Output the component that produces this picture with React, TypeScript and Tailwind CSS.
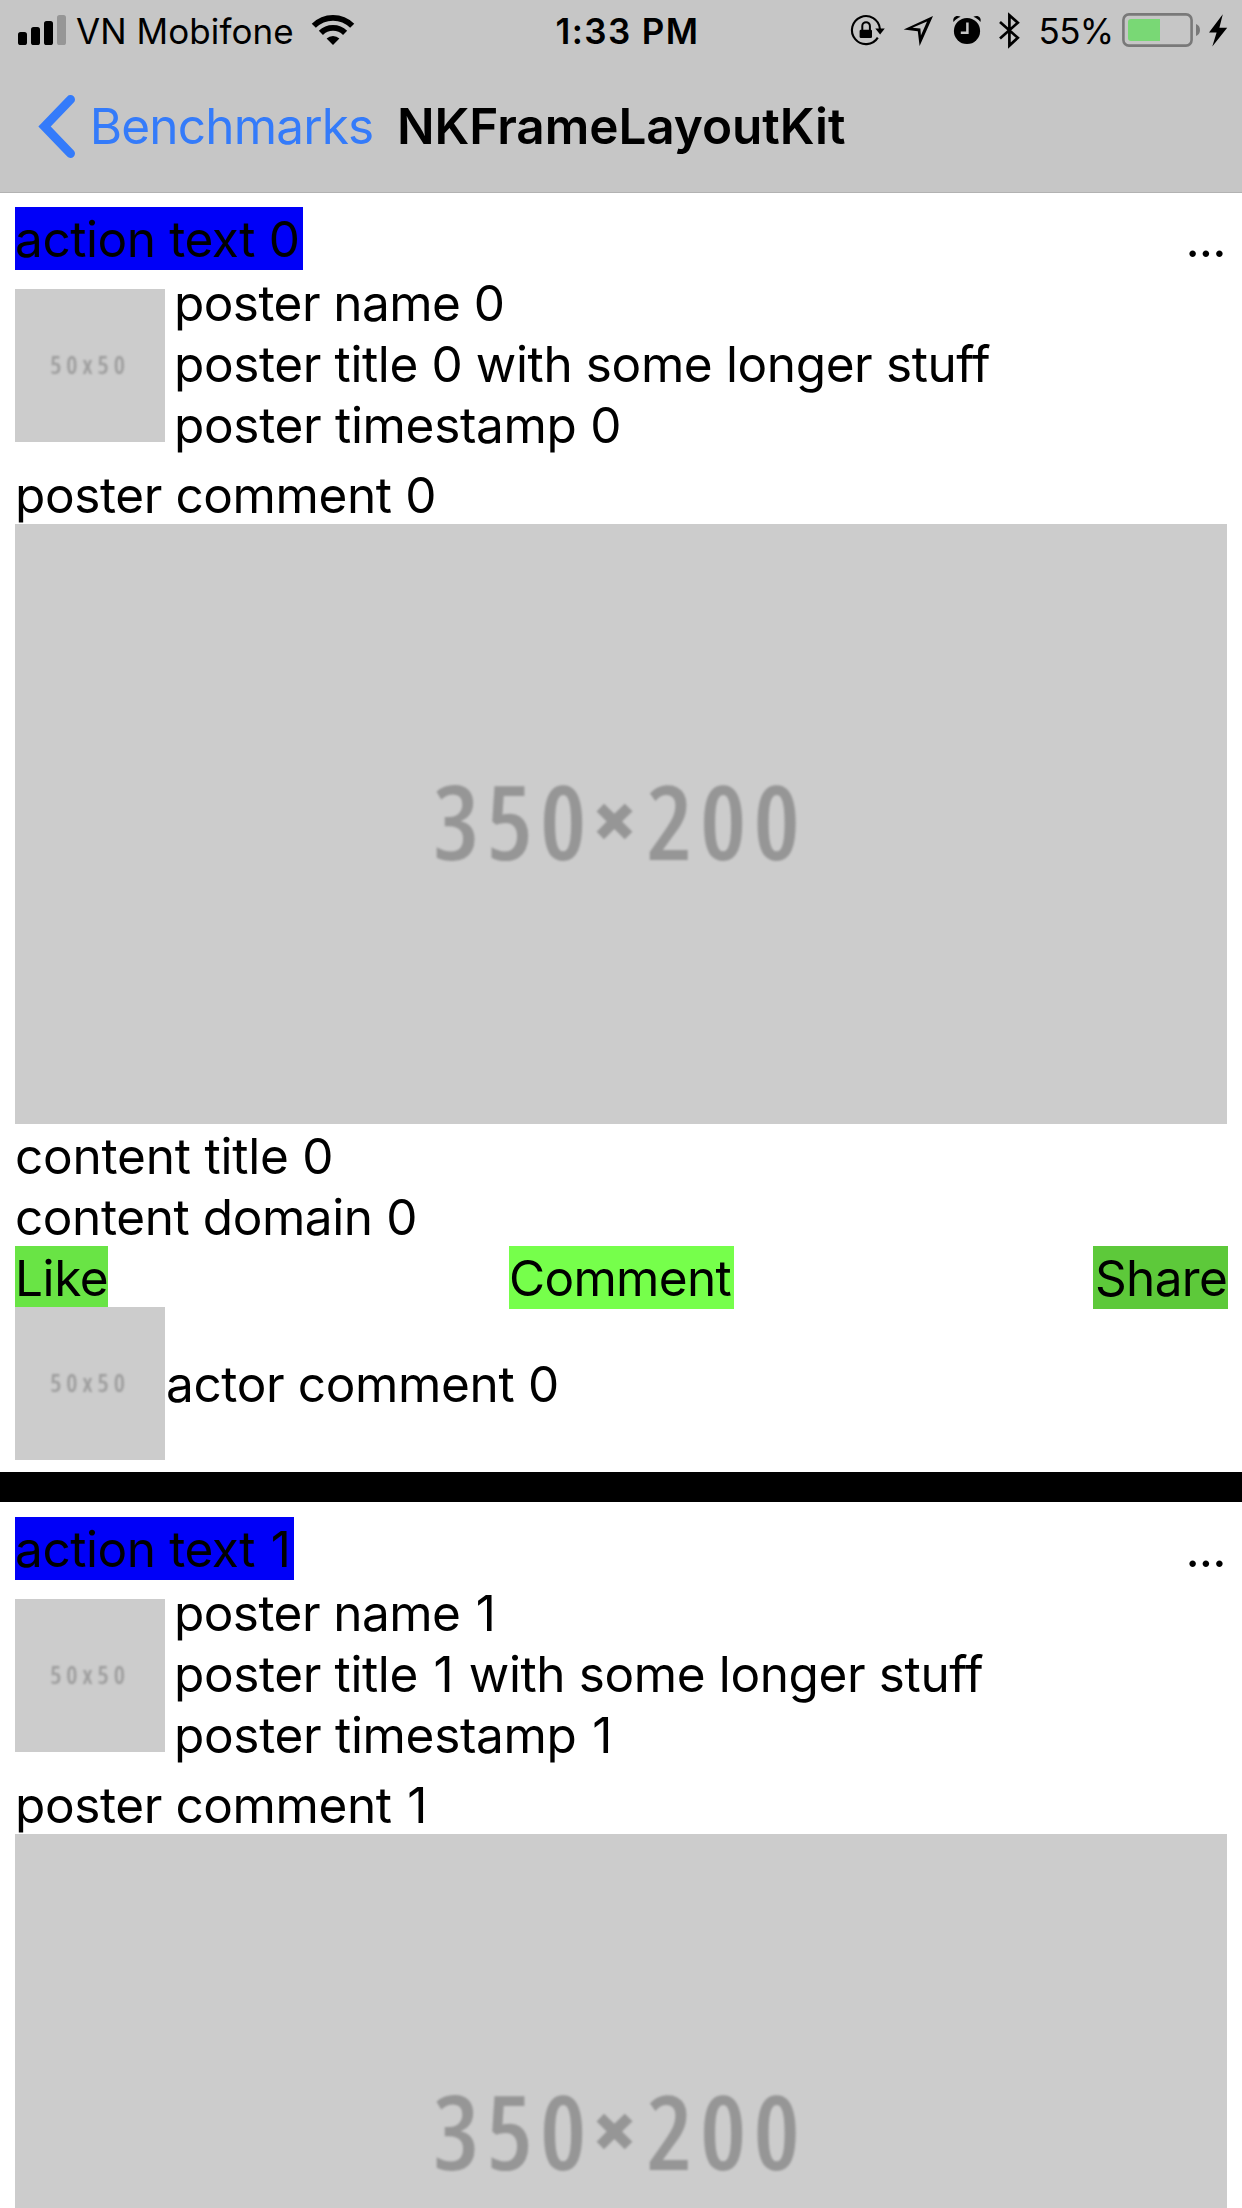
type Post = {
  id: number;
  actionWidth: string;
  numberStyle: string;
  expanded: boolean;
};

const posts: Post[] = [
  { id: 0, actionWidth: "w-[288px]", numberStyle: "", expanded: true },
  { id: 1, actionWidth: "w-[279px]", numberStyle: "pl-[2px] pr-[2px]", expanded: false },
];

function StatusBar() {
  return (
    <div className="flex h-[60px] text-[35px] leading-[63px] whitespace-pre">
      <svg className="shrink-0" width="72" height="60" viewBox="0 0 72 60">
        <rect x="18" y="32" width="9" height="13" rx="2.6" />
        <rect x="31" y="27" width="9" height="18" rx="2.6" />
        <rect x="44" y="21" width="9" height="24" rx="2.6" />
        <rect x="57" y="15" width="9" height="30" rx="2.6" fill="#969696" />
      </svg>
      <span className="w-[228px] shrink-0 pl-[4px] tracking-[0.08px]">VN Mobifone</span>
      <svg className="shrink-0" width="60" height="60" viewBox="300 0 60 60">
        <path d="M333 45 L326.6 38.6 A9 9 0 0 1 339.4 38.6 Z" />
        <path d="M320.9 32.9 A17.1 17.1 0 0 1 345.1 32.9" fill="none" stroke="#000" strokeWidth="5.8" />
        <path d="M313.8 25.8 A27.1 27.1 0 0 1 352.2 25.8" fill="none" stroke="#000" strokeWidth="5.8" />
      </svg>
      <span className="flex-1 pl-[195.5px] font-[570] tracking-[1.4px]">1:33 PM</span>
      <svg className="shrink-0" width="55" height="60" viewBox="840 0 55 60">
        <path d="M879.9 29 A14 14 0 1 0 877.8 37.6" fill="none" stroke="#000" strokeWidth="2.1" />
        <path d="M875.3 28.4 H884.8 L880.1 34.4 Z" />
        <rect x="859.6" y="29.8" width="12.4" height="8.2" rx="1.3" />
        <path d="M862.3 31 V26 A3.8 3.8 0 0 1 869.9 26 V31" fill="none" stroke="#000" strokeWidth="2" />
      </svg>
      <svg className="shrink-0" width="47" height="60" viewBox="895 0 47 60">
        <path
          fillRule="evenodd"
          d="M903.7 29.6 L933 16 L919.6 46 L917.8 31.2 Z M912.4 27.7 L927 21.4 L920.9 35.6 L920.4 28.6 Z"
        />
      </svg>
      <svg className="shrink-0" width="48" height="60" viewBox="942 0 48 60">
        <circle cx="967" cy="31" r="13.1" />
        <path d="M953.6 22 C952 17.6 956.2 14.4 960.6 16.8 C957.6 18 955.4 19.6 953.6 22 Z" />
        <path d="M980.4 22 C982 17.6 977.8 14.4 973.4 16.8 C976.4 18 978.6 19.6 980.4 22 Z" />
        <path d="M967.4 22.4 V32.8 H960.8" fill="none" stroke="#c6c6c6" strokeWidth="2.5" />
      </svg>
      <svg className="shrink-0" width="40" height="60" viewBox="990 0 40 60">
        <path
          d="M1000 22 L1017.8 37.8 L1009.4 45.6 V15.2 L1017.8 22.7 L1000 38.4"
          fill="none"
          stroke="#000"
          strokeWidth="2.7"
        />
      </svg>
      <span className="w-[88px] shrink-0 pl-[8.5px] tracking-[-0.63px]">55%</span>
      <svg className="shrink-0" width="86" height="60" viewBox="1118 0 86 60">
        <rect x="1123.4" y="14.4" width="68.2" height="31.2" rx="5.6" fill="none" stroke="#797979" strokeWidth="2.6" />
        <path d="M1160 19 V41 H1131 Q1128 41 1128 38 V22 Q1128 19 1131 19 Z" fill="#79d875" />
        <path d="M1196 24 C1201.3 25.5 1201.3 34.5 1196 36 Z" fill="#797979" />
      </svg>
      <svg className="shrink-0" width="38" height="60" viewBox="1204 0 38 60">
        <path d="M1222.8 14.3 L1209 32.4 H1216.6 L1212.3 46.4 L1227.2 27.8 H1219.4 Z" />
      </svg>
    </div>
  );
}

function NavBar() {
  return (
    <div className="flex h-[132px] items-start text-[49.5px] leading-[132px]">
      <svg className="shrink-0" width="89" height="132" viewBox="0 60 89 132">
        <path
          d="M70.5 99.5 L44.6 126.5 L70.5 153.5"
          fill="none"
          stroke="#347bfa"
          strokeWidth="9"
          strokeLinecap="round"
          strokeLinejoin="miter"
        />
      </svg>
      <span className="w-[308px] shrink-0 pl-[0.7px] tracking-[-0.82px] text-[#347bfa]">Benchmarks</span>
      <h1 className="font-semibold tracking-[-0.06px]">NKFrameLayoutKit</h1>
    </div>
  );
}

function Thumbnail() {
  return (
    <div className="flex h-[153px] w-[150px] shrink-0 items-center justify-center bg-[#ccc]">
      <span className="pb-[2px] font-['Open_Sans',sans-serif] text-[25px] leading-none font-semibold tracking-[5px] text-[#9c9c9c] blur-[1.1px] [font-stretch:75%]">
        50x50
      </span>
    </div>
  );
}

function Banner() {
  return (
    <div className="flex h-[600px] items-center justify-center bg-[#ccc]">
      <div className="flex items-center pr-[2px] pb-[9px] font-['Open_Sans',sans-serif] text-[103.5px] leading-none font-semibold tracking-[7.2px] text-[#969696] blur-[0.9px] [font-stretch:75%]">
        <span>350</span>
        <span className="pb-[2px] text-[84px] font-extrabold tracking-[11px]">×</span>
        <span>200</span>
      </div>
    </div>
  );
}

function PostCard({ post }: { post: Post }) {
  const num = <span className={post.numberStyle}>{post.id}</span>;
  return (
    <article className="h-[1280px] bg-white px-[15px] pt-[15px] leading-[64px] tracking-[-0.42px] whitespace-nowrap">
      <div className="flex h-[64px] justify-between">
        <div className={`h-[63px] bg-[#0000f8] ${post.actionWidth}`}>action text {num}</div>
        <div className="pr-[1.5px] tracking-[-0.9px]">...</div>
      </div>
      <div className="flex h-[183px]">
        <div className="pt-[18px]">
          <Thumbnail />
        </div>
        <div className="pl-[9px]">
          <p className="h-[61px] tracking-[-0.56px]">poster name {num}</p>
          <p className="h-[61px] tracking-[-0.38px]">poster title {num} with some longer stuff</p>
          <p className="h-[61px] tracking-[-0.32px]">poster timestamp {num}</p>
        </div>
      </div>
      <p className="mt-[9px] h-[61px] tracking-[-0.4px]">poster comment {num}</p>
      <Banner />
      {post.expanded && (
        <>
          <p className="h-[61px] tracking-[-0.21px]">content title {num}</p>
          <p className="h-[61px]">content domain {num}</p>
          <div className="flex h-[61px] items-start justify-between">
            <p className="h-[61px] w-[93px] bg-[#69e445]">Like</p>
            <p className="ml-[42px] h-[63px] w-[225px] bg-[#76ff4b] tracking-[-0.7px]">Comment</p>
            <p className="-mr-px h-[63px] w-[135px] bg-[#5dc93a] pl-[2px] tracking-[-0.66px]">Share</p>
          </div>
          <div className="flex h-[153px]">
            <Thumbnail />
            <p className="pt-[45px] pl-px tracking-[-0.36px]">actor comment {num}</p>
          </div>
        </>
      )}
    </article>
  );
}

export default function App() {
  return (
    <div className="flex h-[2208px] w-[1242px] flex-col overflow-hidden bg-white font-['Inter',sans-serif] text-black">
      <header className="relative h-[192px] shrink-0 bg-[#c6c6c6] shadow-[0_1px_0_#b2b2b2]">
        <StatusBar />
        <NavBar />
      </header>
      <main className="flex h-[2016px] flex-col gap-[30px] overflow-hidden bg-black text-[49.5px]">
        {posts.map((post) => (
          <div key={post.id} className="shrink-0">
            <PostCard post={post} />
          </div>
        ))}
      </main>
    </div>
  );
}
